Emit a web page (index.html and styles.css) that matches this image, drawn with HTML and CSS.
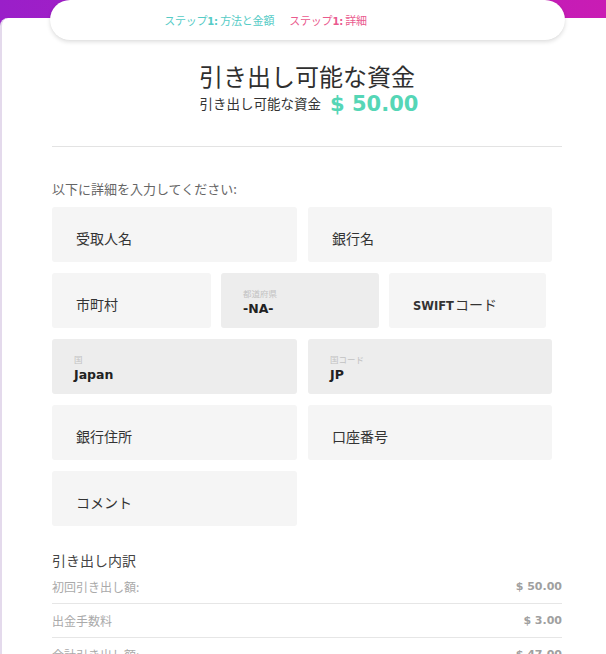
FILE: index.html
```html
<!DOCTYPE html>
<html lang="ja">
<head>
<meta charset="utf-8">
<title>引き出し</title>
<link rel="stylesheet" href="styles.css">
</head>
<body>
<div class="page">
  <div class="card">
    <div class="steps">
      <span class="step step-done">ステップ<b>1:</b> 方法と金額</span>
      <span class="step step-current">ステップ<b>1:</b> 詳細</span>
    </div>

    <div class="header">
      <h1 class="title">引き出し可能な資金</h1>
      <div class="balance">
        <span class="balance-label">引き出し可能な資金</span>
        <span class="balance-amount">$ 50.00</span>
      </div>
    </div>

    <hr class="divider">

    <p class="intro">以下に詳細を入力してください:</p>

    <div class="form">
      <div class="row row-2">
        <div class="field"><span class="placeholder">受取人名</span></div>
        <div class="field"><span class="placeholder">銀行名</span></div>
      </div>
      <div class="row row-3">
        <div class="field"><span class="placeholder">市町村</span></div>
        <div class="field field-disabled"><span class="mini-label">都道府県</span><span class="value">-NA-</span></div>
        <div class="field"><span class="placeholder"><b class="latin">SWIFT</b>コード</span></div>
      </div>
      <div class="row row-2">
        <div class="field field-disabled"><span class="mini-label">国</span><span class="value">Japan</span></div>
        <div class="field field-disabled"><span class="mini-label">国コード</span><span class="value">JP</span></div>
      </div>
      <div class="row row-2">
        <div class="field"><span class="placeholder">銀行住所</span></div>
        <div class="field"><span class="placeholder">口座番号</span></div>
      </div>
      <div class="row row-2">
        <div class="field"><span class="placeholder">コメント</span></div>
      </div>
    </div>

    <div class="breakdown">
      <h2 class="breakdown-title">引き出し内訳</h2>
      <div class="line-item"><span>初回引き出し額:</span><span class="amt">$ 50.00</span></div>
      <div class="line-item"><span>出金手数料</span><span class="amt">$ 3.00</span></div>
      <div class="line-item line-total"><span>合計引き出し額:</span><span class="glow"></span><span class="amt">$ 47.00</span></div>
    </div>
  </div>
</div>
</body>
</html>
```

FILE: styles.css
```css
* { box-sizing: border-box; }

html, body {
  margin: 0;
  padding: 0;
  height: 100%;
  overflow: hidden;
}

body {
  font-family: "Noto Sans CJK JP", "Noto Sans", sans-serif;
  color: #333;
  background: #fff;
}

.page {
  min-height: 100%;
  padding-top: 18px;
  background: linear-gradient(90deg, #9a1fc9 0%, #b21dc0 50%, #c91cb4 100%);
}

.card {
  display: flow-root;
  min-height: 640px;
  background: #fff;
  border-left: 2px solid #e4daec;
  border-top-left-radius: 8px;
  padding: 0 44px 0 50px;
}

.steps {
  margin: -18px 0 0 -2px;
  width: 515px;
  height: 40px;
  border-radius: 20px;
  background: #fff;
  box-shadow: 0 2px 4px rgba(0, 0, 0, 0.13), 0 0 1px rgba(0, 0, 0, 0.08);
  display: flex;
  align-items: center;
  justify-content: center;
  gap: 15px;
  padding-right: 84px;
  font-size: 11px;
  letter-spacing: -0.2px;
}

.step b { font-family: "DejaVu Sans", sans-serif; font-weight: 700; font-size: 10px; }
.step-done { color: #55cbc6; }
.step-current { color: #ea5a8e; }

.header {
  margin-top: 21px;
  text-align: center;
}

.title {
  margin: 0;
  font-size: 24px;
  line-height: 30px;
  font-weight: 400;
  color: #2f2f2f;
}

.balance {
  display: flex;
  justify-content: center;
  align-items: center;
  gap: 9px;
  height: 26px;
  margin-left: 4px;
}

.balance-label {
  font-size: 13.5px;
  color: #333;
  position: relative;
  top: -1px;
}

.balance-amount {
  font-family: "DejaVu Sans", sans-serif;
  font-weight: 700;
  font-size: 21px;
  line-height: 26px;
  color: #55d6b6;
}

.divider {
  margin: 29px 0 0 0;
  border: 0;
  border-top: 1px solid #e3e3e3;
}

.intro {
  margin: 33px 0 9px 0;
  font-size: 13px;
  line-height: 18px;
  color: #666;
}

.form {
  display: flex;
  flex-direction: column;
  gap: 11px;
}

.row {
  display: grid;
  gap: 11px;
}

.row-2 {
  grid-template-columns: 245px 244px;
}

.row-3 {
  grid-template-columns: 159px 158px 157px;
  gap: 10px;
}

.field {
  height: 55px;
  background: #f5f5f5;
  border-radius: 3px;
  padding: 0 24px;
  display: flex;
  flex-direction: column;
  justify-content: center;
}

.placeholder {
  font-size: 14px;
  color: #333;
  padding-top: 6px;
}

.placeholder .latin {
  font-family: "DejaVu Sans", sans-serif;
  font-weight: 700;
  font-size: 11.5px;
  margin-right: 1px;
}

.field-disabled {
  background: #ededed;
  justify-content: flex-start;
  padding: 15px 22px 0 22px;
}

.mini-label {
  font-size: 8.5px;
  line-height: 11px;
  color: #c2c2c2;
}

.value {
  font-family: "DejaVu Sans", sans-serif;
  font-weight: 700;
  font-size: 12.5px;
  line-height: 16px;
  margin-top: 2px;
  color: #222;
}

.breakdown {
  margin-top: 24px;
}

.breakdown-title {
  margin: 0;
  font-size: 14px;
  line-height: 20px;
  font-weight: 400;
  color: #444;
}

.line-item {
  display: flex;
  justify-content: space-between;
  padding: 8px 0;
  line-height: 17px;
  font-size: 12px;
  color: #aaa;
  border-bottom: 1px solid #e6e6e6;
}

.line-total {
  justify-content: flex-start;
  align-items: flex-end;
}

.glow {
  flex: none;
  width: 244px;
  height: 8px;
  margin-left: 33px;
  background: linear-gradient(90deg, #eefaec 0%, #f4fcf1 60%, #f8fdf7 100%);
  border-radius: 2px;
}

.line-total .amt {
  margin-left: auto;
  align-self: center;
}

.amt {
  font-family: "DejaVu Sans", sans-serif;
  font-weight: 700;
  font-size: 11px;
  color: #a0a0a0;
}
```
